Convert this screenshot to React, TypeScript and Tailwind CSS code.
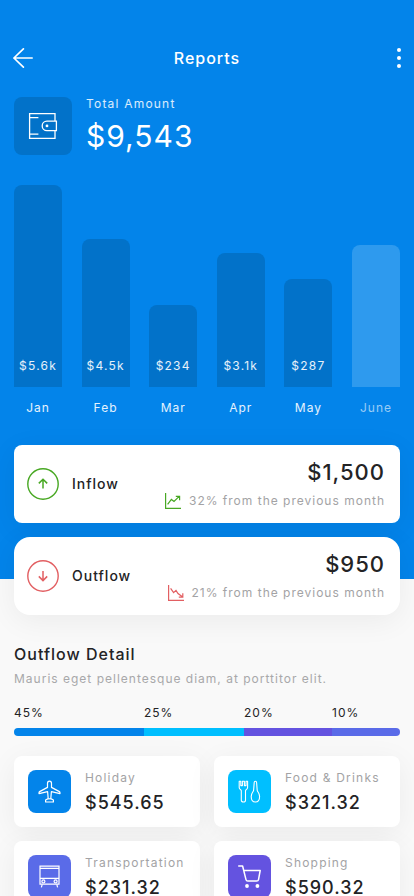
import type { ReactNode } from "react";

interface Month {
  label: string;
  amount?: string;
  height: number;
}

const MONTHS: Month[] = [
  { label: "Jan", amount: "$5.6k", height: 202 },
  { label: "Feb", amount: "$4.5k", height: 148 },
  { label: "Mar", amount: "$234", height: 82 },
  { label: "Apr", amount: "$3.1k", height: 134 },
  { label: "May", amount: "$287", height: 108 },
  { label: "June", height: 142 }
];

const SEGMENTS = [
  { label: "45%", share: 130, color: "bg-[#0384ea]" },
  { label: "25%", share: 100, color: "bg-[#00bfff]" },
  { label: "20%", share: 88, color: "bg-[#6453e0]" },
  { label: "10%", share: 68, color: "bg-[#5a6be8]" }
];

const SHARE_TOTAL = SEGMENTS.reduce((sum, s) => sum + s.share, 0);

function WalletIcon() {
  return (
    <svg width="30" height="30" viewBox="0 0 30 30" fill="none" stroke="currentColor" strokeWidth="1.3">
      <path d="M27 10V2.6H1.6V27.4H27V19.6" />
      <path d="M1.6 6.6H10.4M1.6 23.2H10.4" />
      <path d="M28.4 10.2H18.9a4.7 4.7 0 0 0 0 9.4H28.4Z" />
      <circle cx="19" cy="14.9" r="1.4" fill="currentColor" stroke="none" />
    </svg>
  );
}

function TrendIcon({ down }: { down?: boolean }) {
  return (
    <svg width="16" height="16" viewBox="0 0 16 16" fill="none" stroke="currentColor" strokeWidth="1.2">
      <path d="M0.6 0V15.4H16" />
      {down ? (
        <path d="M2.6 3.4L5.6 7.6L8 5.4L10 8.6L14.4 11.8M14.8 8.2V12.2H10.8" />
      ) : (
        <path d="M2.6 11.4L6.4 6.4L9 8.4L14.2 3.4M10.8 3.4H14.6V7.2" />
      )}
    </svg>
  );
}

function ArrowCircleIcon({ down }: { down?: boolean }) {
  return (
    <svg width="32" height="32" viewBox="0 0 32 32" fill="none" stroke="currentColor">
      <circle cx="16" cy="16" r="15.2" strokeWidth="1.4" />
      <path
        d={down ? "M16 11V20.4M11.8 16.4L16 20.6L20.2 16.4" : "M16 20.6V11.4M11.8 15.4L16 11.2L20.2 15.4"}
        strokeWidth="1.5"
      />
    </svg>
  );
}

function PlaneIcon() {
  return (
    <svg width="23" height="23" viewBox="0 0 23 23" fill="none" stroke="currentColor" strokeWidth="1.2" strokeLinejoin="round">
      <path d="M11.5 1.2C10.2 1.2 9.5 2.2 9.5 3.4V7.4L1.6 11.6C1.1 11.9 1 12.3 1 12.8V13.6L9.6 11.6L10.2 18.6L7.6 20V22H15.4V20L12.8 18.6L13.4 11.6L22 13.6V12.8C22 12.3 21.9 11.9 21.4 11.6L13.5 7.4V3.4C13.5 2.2 12.8 1.2 11.5 1.2Z" />
      <path d="M10.2 18.8H12.8" />
    </svg>
  );
}

function CutleryIcon() {
  return (
    <svg width="23" height="23" viewBox="0 0 23 23" fill="none" stroke="currentColor" strokeWidth="1.1" strokeLinejoin="round">
      <path d="M1.2 1.2H2.8V5.6H4.4V1.2H6.4V5.6H8V1.2H9.6V7.4C9.6 8.9 8.2 9.6 7.5 10.6V20.2C7.5 21.2 6.7 22 5.4 22C4.1 22 3.3 21.2 3.3 20.2V10.6C2.6 9.6 1.2 8.9 1.2 7.4Z" />
      <path d="M17.4 1.2C16.6 1.2 16.2 1.8 16.2 2.6L15.6 10.2C15.4 11.8 13.2 13 13.2 16.4C13.2 19.6 14.9 22 17.4 22C19.9 22 21.6 19.6 21.6 16.4C21.6 13 19.4 11.8 19.2 10.2L18.6 2.6C18.6 1.8 18.2 1.2 17.4 1.2Z" />
    </svg>
  );
}

function BusIcon() {
  return (
    <svg width="23" height="23" viewBox="0 0 23 23" fill="none" stroke="currentColor" strokeWidth="1.2">
      <path d="M2 1.2H21V19.2H2Z" />
      <path d="M2 3.4H21M2 13.4H21" />
      <circle cx="5.4" cy="16.4" r="1.5" />
      <circle cx="17.6" cy="16.4" r="1.5" />
      <path d="M4.2 19.4L3.4 22.4M18.8 19.4L19.6 22.4" />
    </svg>
  );
}

function CartIcon() {
  return (
    <svg width="23" height="23" viewBox="0 0 23 23" fill="none" stroke="currentColor" strokeWidth="1.5" strokeLinejoin="round">
      <path d="M0.2 1H4.6L8 14.6C8.2 15.5 8.8 16.1 9.8 16.1H18.6C19.6 16.1 20.3 15.6 20.5 14.6L22.2 5.5H5.8" />
      <circle cx="9" cy="21" r="1.9" fill="currentColor" stroke="none" />
      <circle cx="19.4" cy="21" r="1.9" fill="currentColor" stroke="none" />
    </svg>
  );
}

interface FlowCardProps {
  title: string;
  amount: string;
  note: string;
  down?: boolean;
}

function FlowCard({ title, amount, note, down }: FlowCardProps) {
  const color = down ? "text-[#e25f62]" : "text-[#48a823]";
  return (
    <article
      className={`flex items-center justify-between bg-white py-3 pr-[15px] pl-[13px] shadow-[0_6px_30px_rgba(0,0,0,0.06)] ${
        down ? "rounded-2xl" : "rounded-lg"
      }`}
    >
      <div className="flex items-center gap-[13px]">
        <span className={color}>
          <ArrowCircleIcon down={down} />
        </span>
        <h2 className="text-sm font-medium">{title}</h2>
      </div>
      <div className="flex flex-col items-end gap-1">
        <span className="text-[22px] leading-[30px] font-medium">{amount}</span>
        <div className="flex items-center gap-2">
          <span className={color}>
            <TrendIcon down={down} />
          </span>
          <span className="text-xs leading-5 text-[#a3a3a5]">{note}</span>
        </div>
      </div>
    </article>
  );
}

interface CategoryCardProps {
  title: string;
  amount: string;
  color: string;
  icon: ReactNode;
}

function CategoryCard({ title, amount, color, icon }: CategoryCardProps) {
  return (
    <article className="flex items-center gap-3.5 rounded-lg bg-white p-3.5 shadow-[0_6px_30px_rgba(0,0,0,0.06)]">
      <div className={`flex size-[43px] shrink-0 items-center justify-center rounded-lg text-white ${color}`}>{icon}</div>
      <div className="flex min-w-0 flex-col gap-2">
        <h3 className="text-xs leading-[14px] tracking-widest whitespace-nowrap text-[#a3a3a5]">{title}</h3>
        <span className="text-lg leading-5 font-medium">{amount}</span>
      </div>
    </article>
  );
}

export default function App() {
  return (
    <div className="min-h-screen bg-[#f9f9f9] font-['Inter',sans-serif] tracking-[1px] text-[#232325]">
      <div className="bg-[#0384ea] pt-[46px] pb-[163px] text-white">
        <header className="flex h-6 items-center justify-between px-[13px]">
          <button type="button" aria-label="Back" className="w-5">
            <svg width="20" height="20" viewBox="0 0 20 20" fill="none" stroke="currentColor" strokeWidth="1.7" strokeLinecap="round" strokeLinejoin="round">
              <path d="M10.4 0.9L0.9 10L10.4 19.1M0.9 10H19.2" />
            </svg>
          </button>
          <h1 className="text-base font-medium">Reports</h1>
          <button type="button" aria-label="More options" className="flex w-5 justify-end">
            <svg width="4" height="20" viewBox="0 0 4 20" fill="currentColor">
              <circle cx="2" cy="2" r="2" />
              <circle cx="2" cy="10" r="2" />
              <circle cx="2" cy="18" r="2" />
            </svg>
          </button>
        </header>

        <section className="mt-[27px] flex gap-3.5 px-3.5">
          <div className="flex size-[58px] items-center justify-center rounded-lg bg-[#0272c9]">
            <WalletIcon />
          </div>
          <div className="flex flex-col gap-[9px]">
            <span className="text-xs leading-[14px] tracking-widest text-white/85">Total Amount</span>
            <span className="text-3xl leading-8">$9,543</span>
          </div>
        </section>

        <section className="mt-[30px] flex items-end justify-between px-3.5">
          {MONTHS.map((m) => (
            <div key={m.label} className="flex w-12 flex-col items-center gap-3">
              <div
                className={`flex w-full items-end justify-center rounded-t-lg pb-[11px] ${m.amount ? "bg-[#0272c9]" : "bg-[#2e9aee]"}`}
                style={{ height: m.height }}
              >
                {m.amount && <span className="text-xs leading-5 tracking-widest text-white/90">{m.amount}</span>}
              </div>
              <span className={`text-xs leading-[17px] ${m.amount ? "text-white/90" : "text-white/60"}`}>{m.label}</span>
            </div>
          ))}
        </section>
      </div>

      <main className="-mt-[134px] px-3.5 pb-6">
        <div className="flex flex-col gap-3.5">
          <FlowCard title="Inflow" amount="$1,500" note="32% from the previous month" />
          <FlowCard title="Outflow" amount="$950" note="21% from the previous month" down />
        </div>

        <section className="mt-[27px]">
          <h2 className="text-base font-medium">Outflow Detail</h2>
          <p className="mt-[3px] text-xs leading-5 text-[#a8a8aa]">Mauris eget pellentesque diam, at porttitor elit.</p>

          <div className="mt-4 flex">
            {SEGMENTS.map((s) => (
              <span key={s.label} className="text-xs leading-4" style={{ width: `${(s.share / SHARE_TOTAL) * 100}%` }}>
                {s.label}
              </span>
            ))}
          </div>
          <div className="mt-[7px] flex h-2 overflow-hidden rounded-full">
            {SEGMENTS.map((s) => (
              <div key={s.label} className={s.color} style={{ width: `${(s.share / SHARE_TOTAL) * 100}%` }} />
            ))}
          </div>

          <div className="mt-5 grid grid-cols-2 gap-3.5">
            <CategoryCard title="Holiday" amount="$545.65" color="bg-[#0384ea]" icon={<PlaneIcon />} />
            <CategoryCard title="Food & Drinks" amount="$321.32" color="bg-[#00bfff]" icon={<CutleryIcon />} />
            <CategoryCard title="Transportation" amount="$231.32" color="bg-[#5a6be8]" icon={<BusIcon />} />
            <CategoryCard title="Shopping" amount="$590.32" color="bg-[#6453e0]" icon={<CartIcon />} />
          </div>
        </section>
      </main>
    </div>
  );
}
